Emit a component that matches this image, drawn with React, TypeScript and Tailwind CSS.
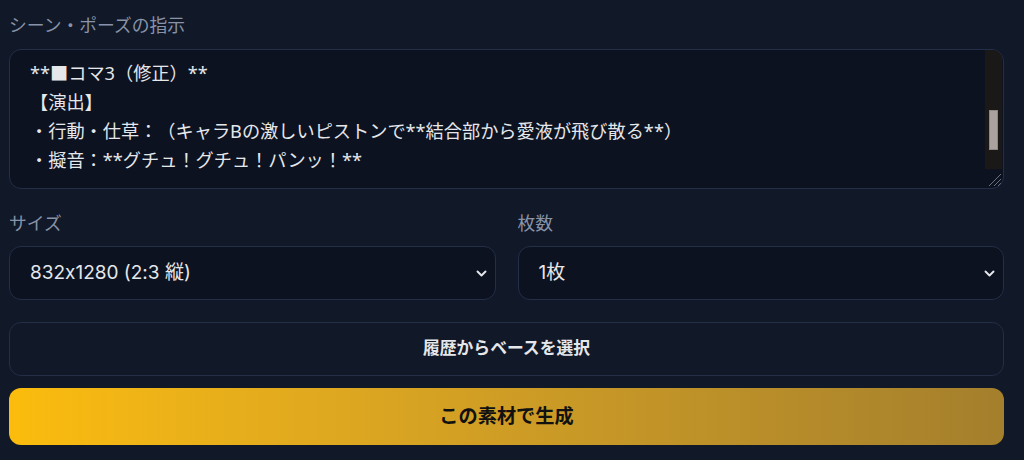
import { useState } from "react";

const lines = [
  "**■コマ3（修正）**",
  "【演出】",
  "・行動・仕草：（キャラBの激しいピストンで**結合部から愛液が飛び散る**）",
  "・擬音：**グチュ！グチュ！パンッ！**",
];

const Chevron = () => (
  <svg width="11" height="7" viewBox="0 0 11 7" fill="none">
    <path
      d="M1.5 1.5L5.5 5.5L9.5 1.5"
      stroke="#e5e7eb"
      strokeWidth="1.9"
      strokeLinecap="round"
      strokeLinejoin="round"
    />
  </svg>
);

const FakeSelect = ({ value }: { value: string }) => (
  <div className="flex h-[54px] items-center justify-between rounded-[12px] border border-[#232e47] bg-[#0c1220] pl-[20px] pr-[8px] text-[19px] text-[#e5e7eb]">
    <span>{value}</span>
    <Chevron />
  </div>
);

export default function App() {
  const [size] = useState("832x1280 (2:3 縦)");
  const [count] = useState("1枚");

  return (
    <div className="min-h-screen bg-[#111827] pl-[9px] pr-[20px] pt-[14px] font-['Inter','Noto_Sans_CJK_JP',sans-serif] [font-feature-settings:'calt'_0] [text-spacing-trim:space-all]">
      <p className="mb-[11px] text-[17.8px] leading-[24px] text-[#8893a7]">
        シーン・ポーズの指示
      </p>

      <div className="relative h-[140px] overflow-hidden rounded-[12px] border border-[#232e47] bg-[#0c1220] pl-[20px] pt-[8.5px]">
        <div className="whitespace-pre font-['Noto_Sans','Noto_Sans_CJK_JP',sans-serif] text-[18.2px] leading-[29px] text-[#e5e7eb]">
          {lines.map((line, i) => (
            <div key={i}>{line}</div>
          ))}
        </div>
        {/* scrollbar over the text box */}
        <div className="absolute right-[1px] top-0 h-[119px] w-[17px] bg-[#1a1918]">
          <div className="absolute left-[4px] top-[60px] h-[40px] w-[9px] border border-[#8e8783] bg-[#a9a29f]" />
        </div>
        <svg
          className="absolute bottom-0 right-0"
          width="18"
          height="18"
          viewBox="0 0 18 18"
        >
          <path d="M4 16L16 4M9 16L16 9M13 16L16 13" stroke="#6b7280" strokeWidth="1" />
        </svg>
      </div>

      <div className="mt-[23px] grid grid-cols-2 gap-[22px]">
        <div>
          <p className="mb-[10px] text-[17.8px] leading-[24px] text-[#8893a7]">サイズ</p>
          <FakeSelect value={size} />
        </div>
        <div>
          <p className="mb-[10px] text-[17.8px] leading-[24px] text-[#8893a7]">枚数</p>
          <FakeSelect value={count} />
        </div>
      </div>

      <button className="mt-[22px] flex h-[54px] w-full items-center justify-center rounded-[12px] border border-[#232e47] bg-[#111827] text-[16.8px] font-bold text-[#e5e7eb]">
        履歴からベースを選択
      </button>

      <button className="mt-[12px] flex h-[57px] w-full items-center justify-center rounded-[12px] bg-gradient-to-r from-[#fbbc0c] to-[#a47f2c] text-[19.2px] font-bold text-[#111111]">
        この素材で生成
      </button>
    </div>
  );
}
